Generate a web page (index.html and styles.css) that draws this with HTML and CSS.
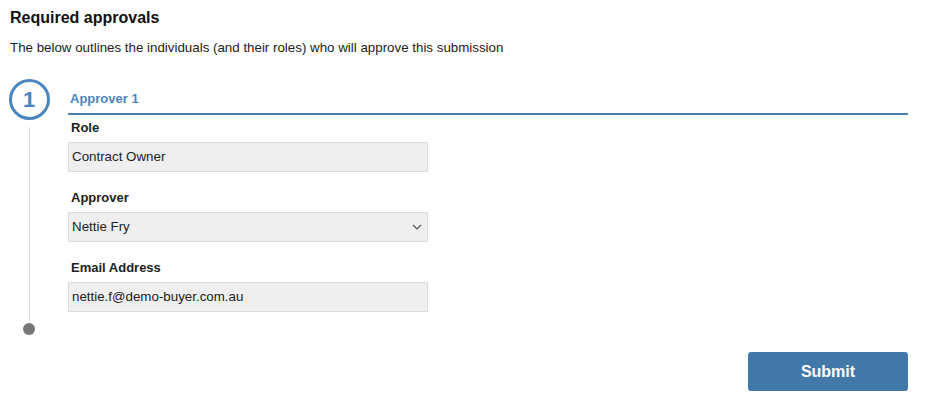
FILE: index.html
```html
<!DOCTYPE html>
<html>
<head>
<meta charset="utf-8">
<link rel="stylesheet" href="styles.css">
</head>
<body>
<div class="page">
  <h2 class="title">Required approvals</h2>
  <p class="intro">The below outlines the individuals (and their roles) who will approve this submission</p>
  <div class="steps">
    <div class="rail">
      <div class="step-num">1</div>
      <div class="rail-line"></div>
      <div class="rail-dot"></div>
    </div>
    <div class="step-body">
      <div class="step-head">Approver 1</div>
      <div class="field">
        <label class="label">Role</label>
        <div class="input">Contract Owner</div>
      </div>
      <div class="field">
        <label class="label">Approver</label>
        <div class="input select">Nettie Fry
          <svg class="chev" width="10" height="6" viewBox="0 0 10 6"><path d="M1 1l4 4 4-4" fill="none" stroke="#555" stroke-width="1.2"/></svg>
        </div>
      </div>
      <div class="field">
        <label class="label">Email Address</label>
        <div class="input">nettie.f@demo-buyer.com.au</div>
      </div>
    </div>
  </div>
  <div class="actions">
    <button class="submit">Submit</button>
  </div>
</div>
</body>
</html>
```
FILE: styles.css
```css
html, body { margin: 0; padding: 0; background: #fff; }
body { font-family: "Liberation Sans", Arial, sans-serif; color: #222; }
.page { padding: 8px 21px 0 10px; }
.title { margin: 0; font-size: 16px; font-weight: bold; line-height: 19px; color: #111; }
.intro { margin: 13px 0 0; font-size: 13.33px; line-height: 16px; color: #222; }
.steps { display: flex; margin-top: 23px; }
.rail { width: 38px; margin-right: 20px; flex: none; display: flex; flex-direction: column; align-items: center; }
.step-num { width: 35px; height: 35px; border: 3px solid #4a86bd; border-radius: 50%; display: flex; align-items: center; justify-content: center; font-size: 22px; font-weight: bold; color: #4a86bd; line-height: 1; }
.rail-line { width: 1px; flex: 1; background: #dcdcdc; margin-top: 7px; }
.rail-dot { width: 12px; height: 12px; border-radius: 50%; background: #777; margin-top: 2px; margin-bottom: -10px; }
.step-body { flex: 1; padding-top: 12px; }
.step-head { font-size: 13px; font-weight: bold; color: #4a86bd; line-height: 15px; padding: 0 2px 7px; border-bottom: 2px solid #4d7fae; }
.field { display: flex; flex-direction: column; }
.label { font-size: 13px; font-weight: bold; color: #222; line-height: 15px; padding: 5px 3px 7px; }
.input { width: 355px; height: 28px; box-sizing: content-box; background: #efefef; border: 1px solid #dcdcdc; font-size: 13.33px; color: #222; line-height: 28px; padding: 0 0 0 3px; margin-bottom: 13px; display: flex; align-items: center; justify-content: space-between; }
.chev { margin-right: 5px; }
.actions { display: flex; justify-content: flex-end; margin-top: 27px; }
.submit { width: 160px; height: 39px; background: #4279a8; border: none; border-radius: 3px; color: #fff; font-family: "Liberation Sans", Arial, sans-serif; font-size: 16px; font-weight: bold; }
```
